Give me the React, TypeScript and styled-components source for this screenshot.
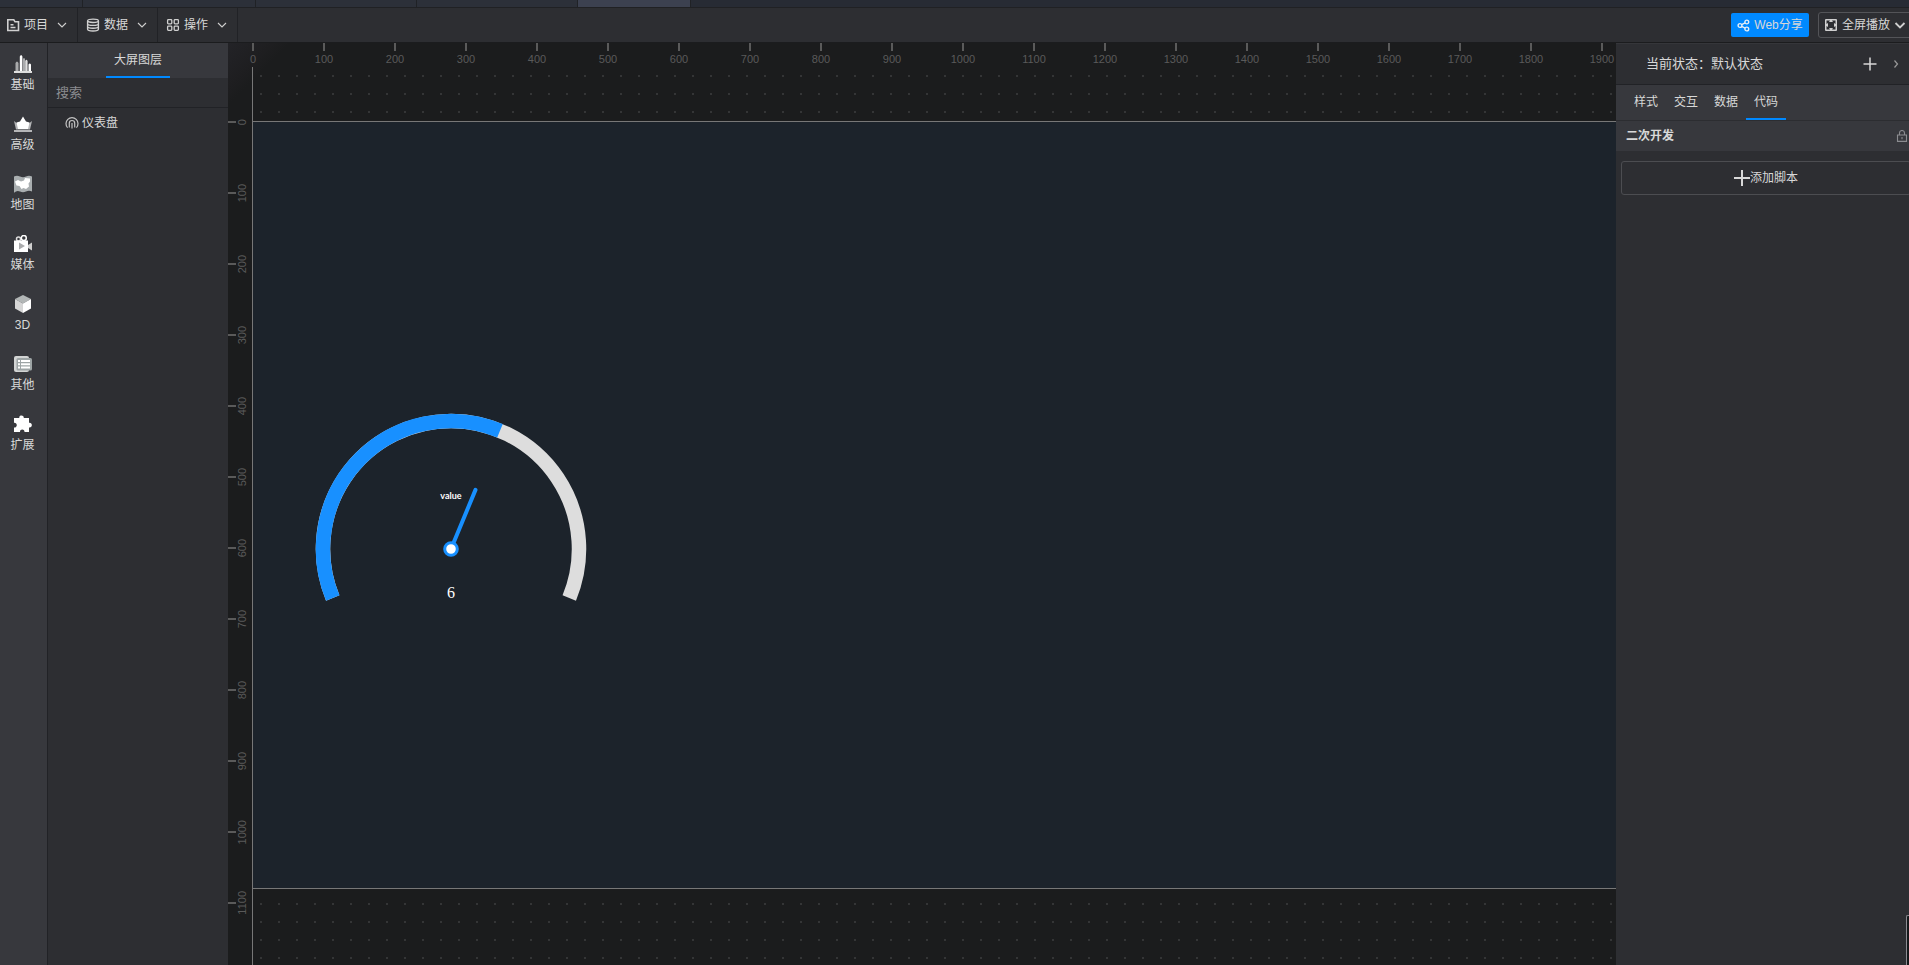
import React from "react";
import styled, { createGlobalStyle, css } from "styled-components";

const color = {
  panel: "#2d2e32",
  raised: "#37383d",
  line: "#212226",
  stage: "#1b1c1d",
  artboard: "#1c232b",
  guide: "#777777",
  tick: "#5a5a5a",
  text: "#d8d8d8",
  muted: "#8b8c90",
  accent: "#0089ff",
};

const GlobalStyle = createGlobalStyle`
  * { box-sizing: border-box; }
  body { margin: 0; background: ${color.panel}; }
  button, input { font: inherit; color: inherit; }
  svg { display: block; flex: none; }
`;

const Shell = styled.div`
  display: flex;
  flex-direction: column;
  height: 100vh;
  overflow: hidden;
  color: ${color.text};
  font-family: "Liberation Sans", "Noto Sans CJK SC", sans-serif;
  font-size: 12px;
  line-height: 16px;
`;

const WindowTabs = styled.div`
  display: flex;
  flex: none;
  height: 8px;
  background: #272b34;
  border-bottom: 1px solid #202124;
`;

const WindowTab = styled.div<{ $width: number; $active?: boolean }>`
  width: ${(p) => p.$width}px;
  background: ${(p) => (p.$active ? "#3c4150" : "#2c3039")};
  border-right: 1px solid #202226;
`;

const Toolbar = styled.header`
  display: flex;
  flex: none;
  align-items: center;
  justify-content: space-between;
  height: 35px;
  overflow: hidden;
  background: ${color.panel};
  border-bottom: 1px solid #1b1c1e;
`;

const plainButton = css`
  display: flex;
  align-items: center;
  padding: 0;
  border: 0;
  background: none;
  white-space: nowrap;
  cursor: pointer;
`;

const Menus = styled.nav`
  display: flex;
  align-self: stretch;
  margin-left: -2px;
`;

const MenuButton = styled.button`
  ${plainButton}
  width: 80px;
  padding-left: 8px;
  gap: 4px;
  border-right: 1px solid ${color.line};
`;

const MenuLabel = styled.span`
  margin-right: 4px;
`;

const Actions = styled.div`
  display: flex;
  align-items: center;
  gap: 9px;
  margin-right: -6px;
`;

const ShareButton = styled.button`
  ${plainButton}
  justify-content: center;
  gap: 4px;
  width: 78px;
  height: 24px;
  border-radius: 2px;
  background: ${color.accent};
`;

const PlayButton = styled.button`
  ${plainButton}
  gap: 4px;
  width: 97px;
  height: 26px;
  padding-left: 5px;
  border: 1px solid #535458;
  border-radius: 3px;
`;

const Workspace = styled.div`
  display: flex;
  flex: 1;
  min-height: 0;
`;

const Palette = styled.nav`
  display: flex;
  flex: none;
  flex-direction: column;
  width: 48px;
  background: ${color.raised};
  border-right: 1px solid ${color.line};
`;

const PaletteButton = styled.button`
  ${plainButton}
  flex-direction: column;
  gap: 4px;
  height: 60px;
  padding: 12px 2px 0 0;
`;

const LayersPanel = styled.aside`
  flex: none;
  width: 180px;
  background: ${color.panel};
`;

const LayersHeader = styled.div`
  display: flex;
  justify-content: center;
  height: 35px;
  background: ${color.raised};
`;

const LayersTitle = styled.h2`
  margin: 0;
  padding: 9px 8px 0;
  font-size: 12px;
  font-weight: 400;
  line-height: 16px;
  border-bottom: 2px solid ${color.accent};
`;

const SearchInput = styled.input`
  display: block;
  width: 100%;
  height: 30px;
  padding: 0 8px 1px;
  border: 0;
  border-bottom: 1px solid ${color.line};
  outline: 0;
  background: none;
  font-size: 13px;
  &::placeholder { color: ${color.muted}; opacity: 1; }
`;

const LayerRow = styled.button`
  ${plainButton}
  gap: 3px;
  width: 100%;
  height: 30px;
  padding-left: 17px;
`;

const Stage = styled.main`
  display: grid;
  flex: 1;
  grid-template: 24px 1fr / 24px 1fr;
  min-width: 0;
  overflow: hidden;
  background: linear-gradient(135deg, #232327 0, #1e1e20 32px, ${color.stage} 44px);
  color: ${color.tick};
  font-size: 11px;
`;

const TopRuler = styled.div`
  display: flex;
  grid-column: 1 / 3;
  min-width: 0;
  overflow: hidden;
`;

const TopMark = styled.div`
  display: flex;
  flex: none;
  flex-direction: column;
  align-items: center;
  width: 72px;
  margin-right: -1px;
  &:first-child { margin-left: -11px; }
  &::before { content: ""; width: 2px; height: 8px; background: ${color.tick}; }
`;

const SideRuler = styled.div`
  min-height: 0;
  padding-top: 19px;
  overflow: hidden;
`;

const SideMark = styled.div`
  display: flex;
  align-items: center;
  height: 72px;
  margin-bottom: -1px;
  &::before { content: ""; width: 8px; height: 2px; background: ${color.tick}; }
`;

const SideLabel = styled.span`
  line-height: 12px;
  writing-mode: vertical-rl;
  transform: rotate(180deg);
`;

const Viewport = styled.div`
  min-width: 0;
  min-height: 0;
  padding-top: 54px;
  overflow: hidden;
  border-left: 1px solid ${color.guide};
  background: conic-gradient(at 2px 2px, transparent 75%, #343536 0) 7px 8px / 18px 18px;
`;

const Artboard = styled.div`
  position: relative;
  height: 768px;
  background: ${color.artboard};
  border: solid ${color.guide};
  border-width: 1px 0;
`;

const GaugeNode = styled.div`
  position: absolute;
  left: 58px;
  top: 287px;
`;

const Inspector = styled.aside`
  flex: none;
  width: 293px;
  overflow: hidden;
  background: ${color.panel};
`;

const InspectorBody = styled.div`
  width: 300px;
`;

const StateBar = styled.div`
  display: flex;
  align-items: center;
  height: 42px;
  padding: 0 15px 1px 30px;
  font-size: 13px;
  border-top: 1px solid #35363a;
  border-bottom: 1px solid ${color.line};
`;

const StateText = styled.span`
  flex: 1;
`;

const IconButton = styled.button`
  ${plainButton}
  margin-left: 14px;
`;

const TabBar = styled.div`
  display: flex;
  height: 36px;
  padding-left: 10px;
  background: ${color.raised};
  border-bottom: 1px solid #2c2d31;
`;

const Tab = styled.button<{ $active?: boolean }>`
  ${plainButton}
  justify-content: center;
  width: 40px;
  border-bottom: 2px solid ${(p) => (p.$active ? color.accent : "transparent")};
`;

const SectionHeader = styled.div`
  display: flex;
  align-items: center;
  justify-content: space-between;
  height: 30px;
  padding: 0 8px 0 10px;
  background: ${color.raised};
`;

const SectionTitle = styled.h3`
  margin: 0;
  font-size: 12px;
  font-weight: 700;
`;

const AddButton = styled.button`
  ${plainButton}
  justify-content: center;
  width: 290px;
  height: 34px;
  margin: 10px 5px;
  border: 1px solid #4c4d51;
  border-radius: 3px;
`;

const DockedPreview = styled.div`
  position: fixed;
  right: 0;
  bottom: 0;
  width: 3px;
  height: 50px;
  border: solid #8c8c92;
  border-width: 1px 0 0 1px;
  border-radius: 2px 0 0 0;
  background: #15181a;
`;

const Chevron = ({ wide }: { wide?: boolean }) => (
  <svg width="12" height="12" viewBox="0 0 12 12" fill="none" stroke="#cfcfcf" strokeWidth={wide ? 1.8 : 1.1}>
    <path d={wide ? "M1.5 4 6 8.5 10.5 4" : "M2 4 6 8 10 4"} />
  </svg>
);

const ProjectIcon = () => (
  <svg width="14" height="14" viewBox="0 0 14 14" fill="none" stroke="#d0d0d0" strokeWidth="1.6">
    <path d="M1.800 1.800h6l1.200 2h3.500v8.700H1.800zM4.500 6.800h3M4.500 9.500h5" />
  </svg>
);

const DataIcon = () => (
  <svg width="14" height="14" viewBox="0 0 14 14" fill="none" stroke="#d0d0d0" strokeWidth="1.4">
    <ellipse cx="7" cy="2.800" rx="5.400" ry="1.700" />
    <path d="M1.600 3v8.300c0 1.200 2.300 1.700 5.400 1.700s5.400-.5 5.400-1.700V3M1.600 5.700c0 1.200 2.300 1.700 5.400 1.700s5.400-.5 5.400-1.700M1.600 8.500c0 1.200 2.300 1.700 5.400 1.700s5.400-.5 5.400-1.700" />
  </svg>
);

const GridIcon = () => (
  <svg width="14" height="14" viewBox="0 0 14 14" fill="none" stroke="#d0d0d0" strokeWidth="1.3">
    <rect x="1.600" y="1.600" width="4.200" height="4.200" rx=".8" />
    <rect x="8.200" y="1.600" width="4.200" height="4.200" rx=".8" />
    <rect x="1.600" y="8.200" width="4.200" height="4.200" rx=".8" />
    <rect x="8.200" y="8.200" width="4.200" height="4.200" rx=".8" />
  </svg>
);

const ShareIcon = () => (
  <svg width="13" height="13" viewBox="0 0 13 13" fill="none" stroke="#e6eef6" strokeWidth="1.400">
    <circle cx="3" cy="6.500" r="1.900" />
    <circle cx="9.800" cy="3" r="1.900" />
    <circle cx="9.800" cy="10" r="1.900" />
    <path d="M4.700 5.600 8.100 3.900M4.700 7.400l3.400 1.700" />
  </svg>
);

const ScreenIcon = () => (
  <svg width="14" height="14" viewBox="0 0 14 14">
    <rect x="1" y="1" width="12" height="12" rx="1" fill="#cfcfcf" />
    <path
      d="M2.500 2.500H6L5 4h4L8 2.500h3.500V6L10 5v4l1.500-1v3.500H8l1-1.500H5l1 1.500H2.500V8L4 9V5L2.500 6z"
      fill="#2d2e32"
    />
  </svg>
);

const DialIcon = () => (
  <svg width="14" height="14" viewBox="0 0 14 14" fill="none" stroke="#c4c4c4" strokeWidth="1.200">
    <path d="M2.600 11.700A6 6 0 1 1 11.400 11.700M4.300 11.500V7.200a2.700 2.700 0 0 1 5.400 0v4.300M7 7v5.500" />
  </svg>
);

const LockIcon = () => (
  <svg width="12" height="12" viewBox="0 0 12 12" fill="none" stroke="#8b8c90" strokeWidth="1.100">
    <path d="M1.500 5h9v6.400h-9zM3.500 5V3a2.500 2.500 0 0 1 5 0v2M6 7v2.200" />
  </svg>
);

const paletteItems = [
  {
    label: "基础",
    art: (
      <>
        <path d="M0 16h18v2H0z" fill="#dedede" />
        <path d="M1.500 8q1.500-3 3 0v8h-3zM9 4q1-2 2 0v12H9z" fill="#a9aaac" />
        <path d="M5.800 1.500q1.300-3 2.600 0V16H5.800zM14.500 9.500q1.200-2 2.500 0V16h-2.500z" fill="#fff" />
        <path d="M11.200 6q1.200-2.500 2.400 0v10h-2.400z" fill="#dedede" />
      </>
    ),
  },
  {
    label: "高级",
    art: (
      <>
        <path d="M0 6l5 4 4-4 4 4 5-4-2 8.500H2z" fill="#b5b6b8" />
        <path d="M9 1.500l3 5 3.500 1L14 14H4L2.500 7.500l3.500-1z" fill="#fff" />
        <path d="M0 15h18v2H0z" fill="#b5b6b8" />
      </>
    ),
  },
  {
    label: "地图",
    art: (
      <>
        <path d="M0 1.500Q3 0 6 1.500t6 0 6 0v15q-3-1.500-6 0t-6 0-6 1.200z" fill="#a9aeb0" />
        <path d="M1 6.500l3-1.500 3 1.500 3-1 1-2.500 5 .5v3l-1.500 2 .5 3-3 2.500-2.500-1-2 1-2-3-3-.5z" fill="#fff" />
      </>
    ),
  },
  {
    label: "媒体",
    art: (
      <>
        <circle cx="4.500" cy="4" r="2" fill="none" stroke="#ddd" strokeWidth="1.500" />
        <circle cx="9.800" cy="3" r="2.500" fill="none" stroke="#fff" strokeWidth="1.500" />
        <path d="M0 5.500h14V17H0z" fill="#fff" />
        <path d="M14 10l4-2.500v8L14 13z" fill="#cfcfcf" />
        <path d="M5 7.500l6 3.500-6 3.500z" fill="#a9aaac" />
      </>
    ),
  },
  {
    label: "3D",
    art: (
      <>
        <path d="M9 0l8 4-8 4.500L1 4z" fill="#b2b6b6" />
        <path d="M1 4l8 4.500V18l-8-4.500z" fill="#d6d6d6" />
        <path d="M17 4L9 8.500V18l8-4.500z" fill="#fff" />
      </>
    ),
  },
  {
    label: "其他",
    art: (
      <>
        <rect x="0" y="1" width="15" height="16" rx="2" fill="#d2d4d4" />
        <rect x="2.500" y="3" width="15.500" height="12.500" rx="1.500" fill="#9da4a5" />
        <path d="M4 5h2v2H4zm3 0h9v2H7zM4 8.200h2v2H4zm3 0h9v2H7zM4 11.400h2v2H4zm3 0h9v2H7z" fill="#fff" />
      </>
    ),
  },
  {
    label: "扩展",
    art: (
      <path
        d="M0 3h5.300C4.800-.2 10-.2 9.800 3H15v4.700c3.800-.5 3.800 5.300 0 4.800V17h-4.500c.2-3.200-4.700-3.200-4.500 0H0v-4.500c3.700.3 3.700-5 0-4.700z"
        fill="#fff"
      />
    ),
  },
];

const menus = [
  { label: "项目", icon: <ProjectIcon /> },
  { label: "数据", icon: <DataIcon /> },
  { label: "操作", icon: <GridIcon /> },
];

const inspectorTabs = ["样式", "交互", "数据", "代码"];

const steps = (count: number) => Array.from({ length: count }, (_, i) => i * 100);

/** Point on a circle around the gauge centre; 0 degrees is straight up, clockwise. */
const polar = (radius: number, degrees: number) => {
  const a = (degrees * Math.PI) / 180;
  return `${(140 + radius * Math.sin(a)).toFixed(2)} ${(140 - radius * Math.cos(a)).toFixed(2)}`;
};

const Gauge = ({ value, max }: { value: number; max: number }) => {
  const sweep = 225;
  const start = -sweep / 2;
  const angle = start + (sweep * value) / max;
  const arc = (from: number, to: number) =>
    `M${polar(128, from)}A128 128 0 ${to - from > 180 ? 1 : 0} 1 ${polar(128, to)}`;
  return (
    <svg width="280" height="200" viewBox="0 0 280 200" role="img" aria-label={`value ${value}`}>
      <path d={arc(start, -start)} fill="none" stroke="#dddddd" strokeWidth="14.500" />
      <path d={arc(start, angle)} fill="none" stroke="#1890ff" strokeWidth="14.500" />
      <path d={`M140 140L${polar(64, angle)}`} stroke="#1890ff" strokeWidth="4" strokeLinecap="round" />
      <circle cx="140" cy="140" r="6.300" fill="#fff" stroke="#1890ff" strokeWidth="3" />
      <text x="140" y="90" fill="#fff" fontFamily="Lato, sans-serif" fontSize="9" fontWeight="700" textAnchor="middle">
        value
      </text>
      <text x="140" y="189" fill="#fff" fontFamily="'Liberation Serif', serif" fontSize="16" textAnchor="middle">
        {value}
      </text>
    </svg>
  );
};

export default function App() {
  return (
    <Shell>
      <GlobalStyle />
      <WindowTabs>
        <WindowTab $width={83} />
        <WindowTab $width={173} />
        <WindowTab $width={161} />
        <WindowTab $width={161} />
        <WindowTab $width={113} $active />
      </WindowTabs>
      <Toolbar>
        <Menus>
          {menus.map((m) => (
            <MenuButton key={m.label}>
              {m.icon}
              <MenuLabel>{m.label}</MenuLabel>
              <Chevron />
            </MenuButton>
          ))}
        </Menus>
        <Actions>
          <ShareButton>
            <ShareIcon />
            Web分享
          </ShareButton>
          <PlayButton>
            <ScreenIcon />
            全屏播放
            <Chevron wide />
          </PlayButton>
        </Actions>
      </Toolbar>
      <Workspace>
        <Palette>
          {paletteItems.map((item) => (
            <PaletteButton key={item.label}>
              <svg width="18" height="18" viewBox="0 0 18 18">
                {item.art}
              </svg>
              {item.label}
            </PaletteButton>
          ))}
        </Palette>
        <LayersPanel>
          <LayersHeader>
            <LayersTitle>大屏图层</LayersTitle>
          </LayersHeader>
          <SearchInput type="text" placeholder="搜索" aria-label="搜索" />
          <LayerRow>
            <DialIcon />
            仪表盘
          </LayerRow>
        </LayersPanel>
        <Stage>
          <TopRuler>
            {steps(20).map((n) => (
              <TopMark key={n}>{n}</TopMark>
            ))}
          </TopRuler>
          <SideRuler>
            {steps(12).map((n) => (
              <SideMark key={n}>
                <SideLabel>{n}</SideLabel>
              </SideMark>
            ))}
          </SideRuler>
          <Viewport>
            <Artboard>
              <GaugeNode>
                <Gauge value={6} max={10} />
              </GaugeNode>
            </Artboard>
          </Viewport>
        </Stage>
        <Inspector>
          <InspectorBody>
            <StateBar>
              <StateText>当前状态：默认状态</StateText>
              <IconButton aria-label="添加状态">
                <svg width="14" height="14" viewBox="0 0 14 14" stroke="#d8d8d8" strokeWidth="1.500">
                  <path d="M7 .5v13M.5 7h13" />
                </svg>
              </IconButton>
              <IconButton aria-label="展开">
                <svg width="10" height="10" viewBox="0 0 10 10" fill="none" stroke="#9a9a9a" strokeWidth="1.200">
                  <path d="M3.500 1.500 6.500 5 3.500 8.500" />
                </svg>
              </IconButton>
            </StateBar>
            <TabBar role="tablist">
              {inspectorTabs.map((t) => (
                <Tab key={t} role="tab" aria-selected={t === "代码"} $active={t === "代码"}>
                  {t}
                </Tab>
              ))}
            </TabBar>
            <SectionHeader>
              <SectionTitle>二次开发</SectionTitle>
              <LockIcon />
            </SectionHeader>
            <AddButton>
              <svg width="16" height="16" viewBox="0 0 16 16" stroke="#d8d8d8" strokeWidth="2">
                <path d="M8 0v16M0 8h16" />
              </svg>
              添加脚本
            </AddButton>
          </InspectorBody>
        </Inspector>
      </Workspace>
      <DockedPreview />
    </Shell>
  );
}
